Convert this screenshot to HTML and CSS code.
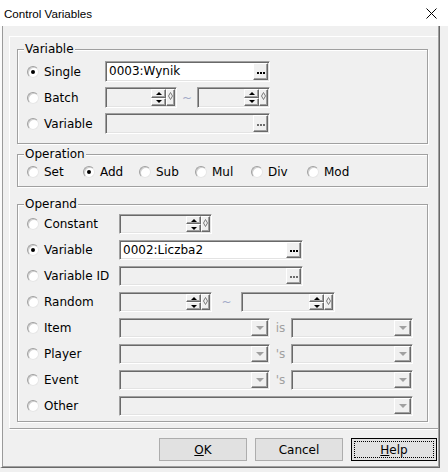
FILE: index.html
```html
<!DOCTYPE html>
<html>
<head>
<meta charset="utf-8">
<title>Control Variables</title>
<link rel="stylesheet" href="styles.css">
</head>
<body>
<div class="titlebar">
  <span class="title">Control Variables</span>
  <svg class="close" width="11" height="11" viewBox="0 0 11 11"><path d="M0.5 0.5L10.5 10.5M10.5 0.5L0.5 10.5" stroke="#000" stroke-width="1" fill="none"/></svg>
</div>
<div class="client">
  <div class="panel">
    <div class="group g-var">
      <span class="legend">Variable</span>
      <div class="row">
        <span class="radio on"></span><span class="lbl lw-var">Single</span>
        <div class="field white" style="width:165px"><span class="val">0003:Wynik</span><span class="browse raised"><svg width="8" height="2" viewBox="0 0 8 2"><rect x="0" y="0" width="2" height="2"/><rect x="3" y="0" width="2" height="2"/><rect x="6" y="0" width="2" height="2"/></svg></span></div>
      </div>
      <div class="row">
        <span class="radio"></span><span class="lbl lw-var">Batch</span>
        <div class="field" style="width:72px"><span class="val"></span><span class="ud"><span class="up raised"></span><span class="dn raised"></span></span><span class="dia raised"><svg width="5" height="8" viewBox="0 0 5 8"><path d="M2.5 0.5L4.5 4L2.5 7.5L0.5 4Z" fill="none" stroke="#7c7c7c" stroke-width="1"/></svg></span></div>
        <span class="tilde" style="width:20px">~</span>
        <div class="field" style="width:73px"><span class="val"></span><span class="ud"><span class="up raised"></span><span class="dn raised"></span></span><span class="dia raised"><svg width="5" height="8" viewBox="0 0 5 8"><path d="M2.5 0.5L4.5 4L2.5 7.5L0.5 4Z" fill="none" stroke="#7c7c7c" stroke-width="1"/></svg></span></div>
      </div>
      <div class="row">
        <span class="radio"></span><span class="lbl lw-var">Variable</span>
        <div class="field" style="width:165px"><span class="val"></span><span class="browse raised off"><svg width="8" height="2" viewBox="0 0 8 2"><rect x="0" y="0" width="2" height="2"/><rect x="3" y="0" width="2" height="2"/><rect x="6" y="0" width="2" height="2"/></svg></span></div>
      </div>
    </div>

    <div class="group g-op">
      <span class="legend">Operation</span>
      <div class="ops">
        <span class="opt"><span class="radio"></span>Set</span>
        <span class="opt"><span class="radio on"></span>Add</span>
        <span class="opt"><span class="radio"></span>Sub</span>
        <span class="opt"><span class="radio"></span>Mul</span>
        <span class="opt"><span class="radio"></span>Div</span>
        <span class="opt"><span class="radio"></span>Mod</span>
      </div>
    </div>

    <div class="group g-opd">
      <span class="legend">Operand</span>
      <div class="row">
        <span class="radio"></span><span class="lbl lw-opd">Constant</span>
        <div class="field" style="width:93px"><span class="val"></span><span class="ud"><span class="up raised"></span><span class="dn raised"></span></span><span class="dia raised"><svg width="5" height="8" viewBox="0 0 5 8"><path d="M2.5 0.5L4.5 4L2.5 7.5L0.5 4Z" fill="none" stroke="#7c7c7c" stroke-width="1"/></svg></span></div>
      </div>
      <div class="row">
        <span class="radio on"></span><span class="lbl lw-opd">Variable</span>
        <div class="field white" style="width:184px"><span class="val">0002:Liczba2</span><span class="browse raised"><svg width="8" height="2" viewBox="0 0 8 2"><rect x="0" y="0" width="2" height="2"/><rect x="3" y="0" width="2" height="2"/><rect x="6" y="0" width="2" height="2"/></svg></span></div>
      </div>
      <div class="row">
        <span class="radio"></span><span class="lbl lw-opd">Variable ID</span>
        <div class="field" style="width:184px"><span class="val"></span><span class="browse raised off"><svg width="8" height="2" viewBox="0 0 8 2"><rect x="0" y="0" width="2" height="2"/><rect x="3" y="0" width="2" height="2"/><rect x="6" y="0" width="2" height="2"/></svg></span></div>
      </div>
      <div class="row">
        <span class="radio"></span><span class="lbl lw-opd">Random</span>
        <div class="field" style="width:93px"><span class="val"></span><span class="ud"><span class="up raised"></span><span class="dn raised"></span></span><span class="dia raised"><svg width="5" height="8" viewBox="0 0 5 8"><path d="M2.5 0.5L4.5 4L2.5 7.5L0.5 4Z" fill="none" stroke="#7c7c7c" stroke-width="1"/></svg></span></div>
        <span class="tilde" style="width:29px">~</span>
        <div class="field" style="width:94px"><span class="val"></span><span class="ud"><span class="up raised"></span><span class="dn raised"></span></span><span class="dia raised"><svg width="5" height="8" viewBox="0 0 5 8"><path d="M2.5 0.5L4.5 4L2.5 7.5L0.5 4Z" fill="none" stroke="#7c7c7c" stroke-width="1"/></svg></span></div>
      </div>
      <div class="row">
        <span class="radio"></span><span class="lbl lw-opd">Item</span>
        <div class="field" style="width:151px"><span class="val"></span><span class="arrow raised"></span></div>
        <span class="sep">is</span>
        <div class="field" style="width:122px"><span class="val"></span><span class="arrow raised"></span></div>
      </div>
      <div class="row">
        <span class="radio"></span><span class="lbl lw-opd">Player</span>
        <div class="field" style="width:151px"><span class="val"></span><span class="arrow raised"></span></div>
        <span class="sep">'s</span>
        <div class="field" style="width:122px"><span class="val"></span><span class="arrow raised"></span></div>
      </div>
      <div class="row">
        <span class="radio"></span><span class="lbl lw-opd">Event</span>
        <div class="field" style="width:151px"><span class="val"></span><span class="arrow raised"></span></div>
        <span class="sep">'s</span>
        <div class="field" style="width:122px"><span class="val"></span><span class="arrow raised"></span></div>
      </div>
      <div class="row">
        <span class="radio"></span><span class="lbl lw-opd">Other</span>
        <div class="field" style="width:294px"><span class="val"></span><span class="arrow raised"></span></div>
      </div>
    </div>
  </div>
  <div class="buttons">
    <button class="btn"><u>O</u>K</button>
    <button class="btn">Cancel</button>
    <button class="btn default"><u>H</u>elp</button>
  </div>
</div>
</body>
</html>
```
FILE: styles.css
```css
* { box-sizing: border-box; }

body {
  margin: 0;
  width: 448px;
  height: 472px;
  overflow: hidden;
  background: #f0f0f0;
  font-family: "DejaVu Sans", sans-serif;
  font-size: 12px;
  color: #000;
}

.titlebar {
  height: 26px;
  background: #fff;
  display: flex;
  align-items: center;
  justify-content: space-between;
  padding: 0 11px 0 4px;
}

.title {
  font-family: "Liberation Sans", Arial, sans-serif;
  font-size: 11.6px;
}

.close { display: block; }

.client {
  width: 440px;
  height: 442px;
  border-left: 2px solid #fbfbfb;
  border-right: 1px solid #696969;
  border-bottom: 1px solid #696969;
  box-shadow: inset 1px 0 0 #9a9a9a, inset -1px -1px 0 #a0a0a0;
  padding-top: 10px;
  display: flex;
  flex-direction: column;
}

.panel {
  width: 429px;
  height: 393px;
  margin-left: 7px;
  border-top: 1px solid #fff;
  border-left: 1px solid #fff;
  border-bottom: 1px solid #a0a0a0;
  box-shadow: 0 1px 0 #fff;
  padding: 12px 0 0 7px;
  display: flex;
  flex-direction: column;
}

.group {
  position: relative;
  width: 411px;
  border: 1px solid #a0a0a0;
  box-shadow: inset 1px 1px 0 #fff, 1px 1px 0 #fff;
  padding-left: 9px;
  display: flex;
  flex-direction: column;
}

.legend {
  position: absolute;
  top: -8px;
  left: 6px;
  padding: 0 1px;
  line-height: 15px;
  background: #f0f0f0;
}

.g-var {
  padding-top: 11px;
  padding-bottom: 9px;
  gap: 5px;
}
.g-var .row { height: 21px; }

.g-op {
  margin-top: 10px;
  padding-top: 10px;
  padding-bottom: 7px;
}

.g-opd {
  margin-top: 17px;
  padding-top: 9px;
  padding-bottom: 5px;
  gap: 6px;
}
.g-opd .row { height: 20px; }

.row {
  display: flex;
  align-items: center;
}

.ops {
  display: flex;
  height: 14px;
  align-items: center;
}

.opt {
  display: flex;
  align-items: center;
  width: 56px;
}

.radio {
  position: relative;
  flex-shrink: 0;
  width: 12px;
  height: 12px;
  margin-right: 5px;
  border-radius: 50%;
  background: #fff;
  border: 1px solid;
  border-color: #a0a0a0 #e6e6e6 #e6e6e6 #a0a0a0;
  box-shadow: inset 1px 1px 0 #cfcfcf;
}

.radio.on::after {
  content: "";
  position: absolute;
  left: 3px;
  top: 3px;
  width: 4px;
  height: 4px;
  border-radius: 50%;
  background: #000;
}

.lbl { flex-shrink: 0; white-space: nowrap; }
.lw-var { width: 61px; }
.lw-opd { width: 75px; }

.field {
  display: flex;
  height: 100%;
  flex-shrink: 0;
  padding: 1px;
  background: #f0f0f0;
  border: 1px solid;
  border-color: #a0a0a0 #fff #fff #a0a0a0;
  box-shadow: inset 1px 1px 0 #696969, inset -1px -1px 0 #e3e3e3;
}

.field.white { background: #fff; }

.val {
  flex: 1;
  padding-left: 2px;
  line-height: 16px;
  white-space: nowrap;
  overflow: hidden;
}

.raised {
  background: #f0f0f0;
  border: 1px solid;
  border-color: #fff #696969 #696969 #fff;
  box-shadow: inset -1px -1px 0 #a0a0a0;
}

.browse {
  width: 15px;
  display: flex;
  align-items: center;
  justify-content: center;
  color: #000;
}
.browse svg { display: block; fill: currentColor; margin-top: 2px; }
.browse.off { color: #6d6d6d; }

.ud {
  width: 15px;
  display: flex;
  flex-direction: column;
}

.up, .dn {
  flex: 1;
  display: flex;
  align-items: center;
  justify-content: center;
}

.up::after, .dn::after {
  content: "";
  width: 0;
  height: 0;
  border-left: 3px solid transparent;
  border-right: 3px solid transparent;
}
.up::after { border-bottom: 3px solid #000; }
.dn::after { border-top: 3px solid #000; }

.dia {
  width: 9px;
  display: flex;
  justify-content: center;
  padding-top: 2px;
}
.dia svg { display: block; }

.arrow {
  width: 17px;
  display: flex;
  align-items: center;
  justify-content: center;
}
.arrow::after {
  content: "";
  width: 0;
  height: 0;
  border-left: 4px solid transparent;
  border-right: 4px solid transparent;
  border-top: 4px solid #a0a0a0;
}

.tilde {
  flex-shrink: 0;
  text-align: center;
  color: #a3abc8;
}

.sep {
  flex-shrink: 0;
  width: 21px;
  text-align: center;
  color: #a0a0a0;
}

.buttons {
  display: flex;
  justify-content: flex-end;
  gap: 8px;
  margin-top: 9px;
  padding-right: 2px;
}

.btn {
  position: relative;
  width: 88px;
  height: 23px;
  padding: 0;
  background: #e1e1e1;
  border: 1px solid #adadad;
  font-family: "DejaVu Sans", sans-serif;
  font-size: 12px;
  color: #000;
}

.btn.default {
  width: 86px;
  border-color: #000;
}

.btn.default::after {
  content: "";
  position: absolute;
  left: 2px;
  top: 2px;
  right: 2px;
  bottom: 2px;
  border: 1px dotted #000;
}
```
